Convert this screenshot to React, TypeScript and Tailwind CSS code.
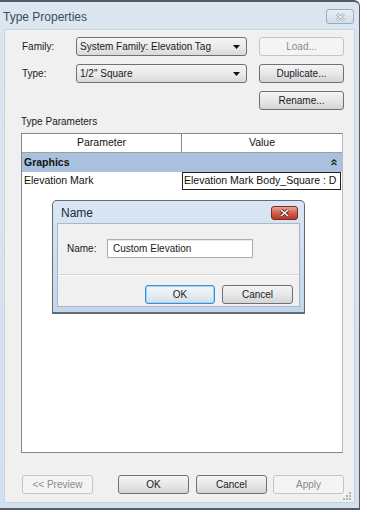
import React from "react";

const ui = { fontFamily: '"Liberation Sans", Arial, sans-serif' };

type BtnProps = {
  label: string;
  disabled?: boolean;
  focused?: boolean;
  className?: string;
};

function WinButton({ label, disabled, focused, className }: BtnProps) {
  let look =
    "border-[#707070] bg-linear-to-b from-[#f4f4f4] via-[#e8e8e8] to-[#d4d4d4] text-[#1a1a1a]";
  if (disabled) look = "border-[#c2c6ca] bg-[#f4f4f4] text-[#8a8a8a]";
  if (focused)
    look =
      "border-[#3c8fd0] bg-linear-to-b from-[#f2f7fb] via-[#e6eef5] to-[#d3dde6] text-[#1a1a1a] shadow-[inset_0_0_0_1px_#9fd2f4]";
  return (
    <div
      className={`flex h-[19px] shrink-0 items-center justify-center rounded-[3px] border text-[10px] ${look} ${className ?? ""}`}
    >
      {label}
    </div>
  );
}

function Combo({ value }: { value: string }) {
  return (
    <div className="flex h-[19px] w-[171px] shrink-0 items-center justify-between rounded-[3px] border border-[#707070] bg-linear-to-b from-[#f4f4f4] via-[#ebebeb] to-[#d9d9d9] pl-[3px] pr-[6px] text-[10px] text-[#1a1a1a]">
      <span>{value}</span>
      <svg width="7" height="4" viewBox="0 0 7 4">
        <path d="M0 0h7L3.5 4z" fill="#111" />
      </svg>
    </div>
  );
}

function Dialog() {
  return (
    <div className="absolute left-[52px] top-[200px] flex h-[114px] w-[253px] flex-col rounded-t-[5px] border border-b-2 border-[#5f6a76] bg-linear-to-b from-[#dae6f3] to-[#c4d6ea]">
      <div className="flex h-[22px] items-center justify-between pl-[8px] pr-[6px] pt-[2px]">
        <span className="text-[12px] text-[#1e2a38]">Name</span>
        <div className="flex h-[14px] w-[27px] items-center justify-center rounded-[3px] border border-[#7a2a22] bg-linear-to-b from-[#e8a493] via-[#d0604a] to-[#b8362a]">
          <svg width="9" height="8" viewBox="0 0 9 8">
            <path d="M1 1l7 6M8 1L1 7" stroke="#5a1a12" strokeWidth="3" />
            <path d="M1 1l7 6M8 1L1 7" stroke="#fff" strokeWidth="1.6" />
          </svg>
        </div>
      </div>
      <div className="mx-[4px] mb-[5px] flex flex-1 flex-col border border-[#a8b8c8] bg-[#f0f0f0]">
        <div className="mt-[15px] flex items-center">
          <span className="ml-[9px] w-[40px] text-[10px] text-[#1a1a1a]">Name:</span>
          <div className="flex h-[19px] w-[146px] items-center border border-[#abadb3] bg-white pl-[5px] text-[10px] text-[#1a1a1a] shadow-[inset_0_1px_0_#e3e9ef]">
            Custom Elevation
          </div>
        </div>
        <div className="mt-[16px] h-px bg-[#d5d5d5]" />
        <div className="flex-1 border-t border-white">
          <div className="mt-[9px] flex justify-end gap-[7px] pr-[6px]">
            <WinButton label="OK" focused className="w-[70px]" />
            <WinButton label="Cancel" className="w-[71px]" />
          </div>
        </div>
      </div>
    </div>
  );
}

function ParamTable() {
  return (
    <div className="mt-[5px] flex h-[320px] w-[322px] flex-col border border-[#828790] border-r-[#b7bcc4] bg-white text-[10.5px] text-[#111]">
      <div className="flex h-[19px] border-b border-[#a0a0a0]">
        <div className="flex w-[160px] items-center justify-center border-r border-[#828790]">
          Parameter
        </div>
        <div className="flex flex-1 items-center justify-center">Value</div>
      </div>
      <div className="flex h-[19px] items-center justify-between bg-[#a9c1dc] pl-[2px] pr-[5px] font-bold">
        <span>Graphics</span>
        <svg width="6" height="7" viewBox="0 0 6 7">
          <path d="M0.5 3L3 0.8L5.5 3M0.5 6L3 3.8L5.5 6" stroke="#222" strokeWidth="1.2" fill="none" />
        </svg>
      </div>
      <div className="flex h-[18px]">
        <div className="flex w-[160px] items-center pl-[2px]">Elevation Mark</div>
        <div className="mr-[1px] flex flex-1 items-center whitespace-nowrap border border-[#222] pl-[1px]">
          Elevation Mark Body_Square : D
        </div>
      </div>
    </div>
  );
}

function Grip() {
  const dots = [
    [6, 0],
    [3, 3],
    [6, 3],
    [0, 6],
    [3, 6],
    [6, 6],
  ];
  return (
    <svg className="absolute bottom-[1px] right-[2px]" width="9" height="9" viewBox="0 0 9 9">
      {dots.map(([x, y]) => (
        <rect key={`${x}-${y}`} x={x} y={y} width="2" height="2" fill="#a9b3bd" />
      ))}
    </svg>
  );
}

export default function App() {
  return (
    <div className="relative h-[515px] w-[367px] overflow-hidden bg-white" style={ui}>
      <div className="flex h-[510px] w-[360px] flex-col rounded-tr-[6px] border-t-2 border-r border-b-2 border-[#555b62] bg-linear-to-b from-[#dce6f1] to-[#d3e0ee]">
        {/* title bar */}
        <div className="flex h-[27px] items-start justify-between pl-[3px] pr-[5px] pt-[8px]">
          <span className="text-[12px] leading-[14px] text-[#3b4a5c]">Type Properties</span>
          <div className="-mt-[1px] flex h-[15px] w-[28px] items-center justify-center rounded-[3px] border border-[#9aabbd] bg-linear-to-b from-[#e8eef5] to-[#d2dde9]">
            <svg width="9" height="8" viewBox="0 0 9 8">
              <path d="M1 1l7 6M8 1L1 7" stroke="#8d99a6" strokeWidth="2.6" />
              <path d="M1 1l7 6M8 1L1 7" stroke="#f4f6f8" strokeWidth="1.2" />
            </svg>
          </div>
        </div>

        {/* client area */}
        <div className="relative mb-[5px] ml-[4px] flex w-[351px] flex-1 flex-col border border-[#c6d3e1] bg-[#f0f0f0] pl-[16px] pt-[7px]">
          <div className="flex items-center">
            <span className="w-[55px] pl-[1px] text-[10px] text-[#1a1a1a]">Family:</span>
            <Combo value="System Family: Elevation Tag" />
            <WinButton label="Load..." disabled className="ml-[12px] w-[85px]" />
          </div>
          <div className="mt-[8px] flex items-center">
            <span className="w-[55px] pl-[1px] text-[10px] text-[#1a1a1a]">Type:</span>
            <Combo value={'1/2" Square'} />
            <WinButton label="Duplicate..." className="ml-[12px] w-[85px]" />
          </div>
          <div className="mt-[8px] flex">
            <WinButton label="Rename..." className="ml-[238px] w-[85px]" />
          </div>
          <div className="mt-[6px] text-[10px] leading-[12px] text-[#1a1a1a]">Type Parameters</div>

          <ParamTable />

          <div className="mt-[22px] flex">
            <WinButton label="<< Preview" disabled className="ml-[1px] w-[71px]" />
            <WinButton label="OK" className="ml-[25px] w-[71px]" />
            <WinButton label="Cancel" className="ml-[7px] w-[71px]" />
            <WinButton label="Apply" disabled className="ml-[6px] w-[71px]" />
          </div>
          <Grip />
        </div>
      </div>
      <Dialog />
    </div>
  );
}
